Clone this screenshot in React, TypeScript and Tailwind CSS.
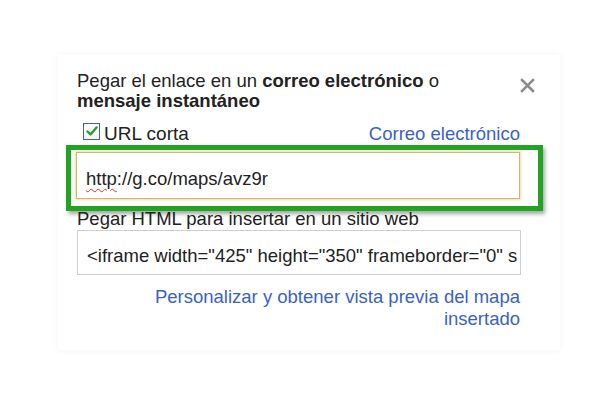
import React from 'react';

const IFRAME_CODE = '<iframe width="425" height="350" frameborder="0" s';

function CloseIcon() {
  return (
    <svg width="15" height="15" viewBox="0 0 15 15" className="mt-[7px] shrink-0">
      <path d="M2 2 L13 13 M13 2 L2 13" stroke="#8c8c8c" strokeWidth="2.6" strokeLinecap="square" />
    </svg>
  );
}

function CheckBox() {
  return (
    <div className="w-[17px] h-[17px] -mt-[1px] ml-[6px] border-[1.5px] border-[#50627a] bg-gradient-to-b from-white to-[#eef1f4] flex items-center justify-center shrink-0">
      <svg width="12" height="11" viewBox="0 0 12 11">
        <path d="M1.5 5.5 L4.5 8.5 L10.5 1.5" stroke="#2c9e2c" strokeWidth="2.4" fill="none" strokeLinecap="round" strokeLinejoin="round" />
      </svg>
    </div>
  );
}

export default function App() {
  return (
    <div className="w-[600px] h-[400px] bg-white pt-[55px] pl-[58px] font-['Liberation_Sans',Arial,sans-serif] text-[18.5px] text-[#222]">
      <div className="w-[502px] h-[295px] pt-[16px] pl-[19px] shadow-[0_0_8px_rgba(0,0,0,0.05)]">
        <div className="w-[443px]">
          {/* header */}
          <div className="flex justify-between -mr-[15px]">
            <p className="w-[400px] leading-[20px]">
              Pegar el enlace en un <b>correo electrónico</b> o <b>mensaje instantáneo</b>
            </p>
            <CloseIcon />
          </div>

          <div className="flex items-start justify-between mt-[13px] h-[20px] leading-[20px]">
            <div className="flex items-start">
              <CheckBox />
              <span className="ml-[4px] text-[19px]">URL corta</span>
            </div>
            <a className="text-[#3a62c3]">Correo electrónico</a>
          </div>

          {/* highlighted short url */}
          <div className="mt-[1px] -ml-[11px] w-[477px] h-[66px] border-[5px] border-[#22a322] shadow-[2px_3px_4px_rgba(0,0,0,0.35)]">
            <div className="ml-[5px] mt-[2px] w-[444px] h-[47px] border border-[#d2b66e] shadow-[0_0_2px_1px_rgba(230,212,160,0.8)] bg-white pl-[9px] pt-[16px] leading-[20px]">
              <span className="underline decoration-wavy decoration-[#e03030] decoration-1 underline-offset-[3px]">http</span>
              ://g.co/maps/avz9r
            </div>
          </div>

          <p className="-mt-[2px] leading-[20px]">Pegar HTML para insertar en un sitio web</p>

          <div className="mt-[1px] w-[444px] h-[45px] border border-[#cfcfcf] pl-[9px] pr-[3px] pt-[15px] leading-[20px]">
            <div className="overflow-hidden whitespace-nowrap">{IFRAME_CODE}</div>
          </div>

          <div className="flex justify-end mt-[11px]">
            <a className="w-[380px] text-right leading-[22px] text-[#3a62c3]">
              Personalizar y obtener vista previa del mapa insertado
            </a>
          </div>
        </div>
      </div>
    </div>
  );
}
